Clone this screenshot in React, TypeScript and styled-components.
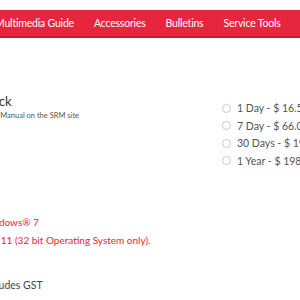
import React from 'react';
import styled, { createGlobalStyle } from 'styled-components';

const GlobalStyle = createGlobalStyle`
  html, body {
    margin: 0;
    padding: 0;
    background: #ffffff;
    overflow: hidden;
  }
  body {
    font-family: Lato, "Open Sans", sans-serif;
  }
`;

const options = [
  '1 Day - $ 16.50',
  '7 Day - $ 66.00',
  '30 Days - $ 198.00',
  '1 Year - $ 1980.00',
];

export default function App(): React.ReactElement {
  return (
    <>
      <GlobalStyle />
      <Page>
        <NavBar>
          <NavItem>Multimedia Guide</NavItem>
          <NavItem>Accessories</NavItem>
          <NavItem>Bulletins</NavItem>
          <NavItem>Service Tools</NavItem>
        </NavBar>
        <Content>
          <Columns>
            <Info>
              <Title>Service Pack</Title>
              <Subtitle>View the Manual on the SRM site</Subtitle>
            </Info>
            <Options>
              {options.map((label) => (
                <Option key={label}>
                  <Radio />
                  <span>{label}</span>
                </Option>
              ))}
            </Options>
          </Columns>
          <Notes>
            <Note $shift={-94}>Compatible with Windows® 7</Note>
            <Note $shift={-76}>Internet Explorer 11 (32 bit Operating System only).</Note>
          </Notes>
          <Price>Price includes GST</Price>
        </Content>
      </Page>
    </>
  );
}

const Page = styled.div`
  width: 300px;
  height: 300px;
  overflow: hidden;
`;

const NavBar = styled.nav`
  display: flex;
  margin-top: 10px;
  height: 26px;
  align-items: center;
  background: #e8253f;
  border-bottom: 2px solid #c91b32;
  white-space: nowrap;
`;

const NavItem = styled.span`
  flex: none;
  padding: 0 10px;
  color: #ffffff;
  font-size: 10.5px;
  letter-spacing: -0.2px;
  &:first-child {
    padding-left: 0;
    margin-left: -5px;
  }
`;

const Content = styled.div`
  white-space: nowrap;
`;

const Columns = styled.div`
  display: flex;
  margin-top: 55px;
`;

const Info = styled.div`
  flex: 1;
  margin-left: -60px;
  display: flex;
  flex-direction: column;
  gap: 2px;
`;

const Title = styled.div`
  font-size: 13px;
  color: #333333;
`;

const Subtitle = styled.div`
  margin-left: 29px;
  font-size: 7.5px;
  color: #555555;
`;

const Options = styled.div`
  flex: none;
  display: flex;
  flex-direction: column;
  gap: 3.5px;
  margin-top: 8px;
  margin-right: -42px;
  width: 120px;
`;

const Option = styled.label`
  display: flex;
  align-items: center;
  gap: 6px;
  height: 14px;
  font-size: 10.5px;
  color: #555555;
`;

const Radio = styled.span`
  flex: none;
  width: 7px;
  height: 7px;
  border: 1px solid #c8c8c8;
  border-radius: 50%;
  background: #ffffff;
`;

const Notes = styled.div`
  margin-top: 45.5px;
  display: flex;
  flex-direction: column;
`;

const Note = styled.div<{ $shift: number }>`
  margin-left: ${(p) => p.$shift}px;
  font-size: 10px;
  line-height: 18px;
  color: #e8253f;
`;

const Price = styled.div`
  margin-top: 27px;
  margin-left: -43px;
  font-size: 10.5px;
  line-height: 18px;
  color: #444444;
`;
